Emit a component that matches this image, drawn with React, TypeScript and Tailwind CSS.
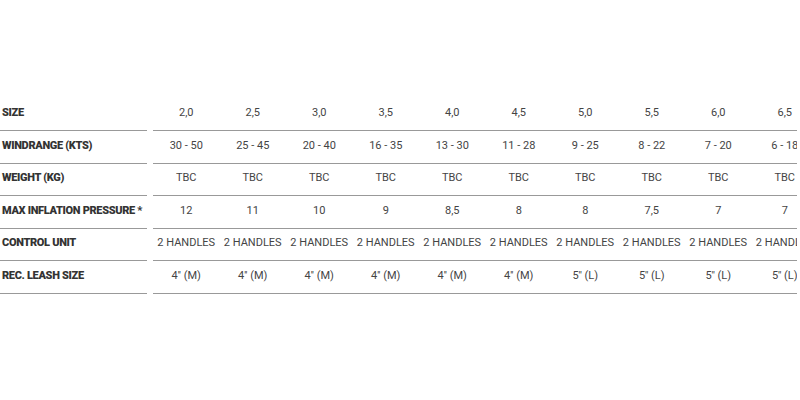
const rows: { label: string; values: string[] }[] = [
  { label: "SIZE", values: ["2,0", "2,5", "3,0", "3,5", "4,0", "4,5", "5,0", "5,5", "6,0", "6,5"] },
  { label: "WINDRANGE (KTS)", values: ["30 - 50", "25 - 45", "20 - 40", "16 - 35", "13 - 30", "11 - 28", "9 - 25", "8 - 22", "7 - 20", "6 - 18"] },
  { label: "WEIGHT (KG)", values: Array(10).fill("TBC") },
  { label: "MAX INFLATION PRESSURE *", values: ["12", "11", "10", "9", "8,5", "8", "8", "7,5", "7", "7"] },
  { label: "CONTROL UNIT", values: Array(10).fill("2 HANDLES") },
  { label: "REC. LEASH SIZE", values: ["4'' (M)", "4'' (M)", "4'' (M)", "4'' (M)", "4'' (M)", "4'' (M)", "5'' (L)", "5'' (L)", "5'' (L)", "5'' (L)"] },
]

export default function App() {
  return (
    <div className="h-[400px] w-[800px] bg-white">
      <div className="w-[797px] overflow-hidden pt-[98.5px]" style={{ fontFamily: "Roboto, 'Liberation Sans', sans-serif" }}>
        {rows.map((row) => (
          <div key={row.label} className="flex h-[32.6px] gap-[6px]">
            <div className="flex w-[147px] shrink-0 items-center border-b-[1.5px] border-[#999] pb-[2px] pl-[2px] text-[11px] font-black tracking-[-0.03em] text-[#333]">
              {row.label}
            </div>
            <div className="flex shrink-0 border-b-[1.5px] border-[#999]">
              {row.values.map((v, i) => (
                <div key={i} className="flex w-[66.5px] shrink-0 items-center justify-center whitespace-nowrap pb-[2px] text-[11px] text-[#444]">
                  {v}
                </div>
              ))}
            </div>
          </div>
        ))}
      </div>
    </div>
  )
}
